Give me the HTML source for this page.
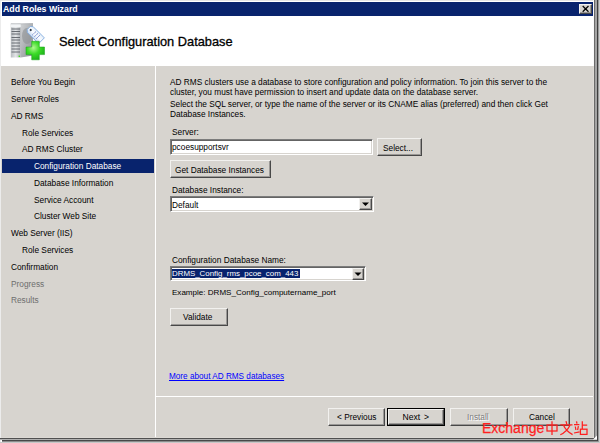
<!DOCTYPE html>
<html><head><meta charset="utf-8">
<style>
*{margin:0;padding:0;box-sizing:border-box}
html,body{width:600px;height:443px;overflow:hidden;background:#fff;position:relative;font-family:"Liberation Sans",sans-serif;}
.a{position:absolute}
.t{position:absolute;white-space:nowrap;font-size:8.3px;line-height:10px;color:#000}
.btn{position:absolute;background:#d7d4cf;border-top:1px solid #f2f1ef;border-left:1px solid #f2f1ef;border-right:1px solid #484848;border-bottom:1px solid #484848;box-shadow:inset -1px -1px 0 #9a9896}
</style></head><body>
<!-- outer frame -->
<div class="a" style="left:0;top:0;width:600px;height:1px;background:#e4e4e4"></div>
<div class="a" style="left:0;top:1px;width:1px;height:442px;background:#ececec"></div>
<!-- window -->
<div class="a" style="left:2px;top:2px;width:591px;height:14px;background:#08236d"></div>
<div class="t" style="left:3px;top:4px;color:#fff;font-weight:bold;font-size:8.8px">Add Roles Wizard</div>
<!-- close button -->
<div class="btn" style="left:579px;top:4px;width:13px;height:10px"></div>
<svg class="a" style="left:579px;top:4px" width="13" height="10" viewBox="0 0 13 10"><path d="M3.7 2L9.5 7.7M9.5 2L3.7 7.7" stroke="#000" stroke-width="1.25"/><circle cx="6.6" cy="4.85" r="0.9" fill="#000"/></svg>
<!-- header -->
<div class="a" style="left:1px;top:16px;width:592px;height:50px;background:#fff"></div>
<div class="a" style="left:59px;top:35px;font-size:12.8px;white-space:nowrap;line-height:14px;color:#000;-webkit-text-stroke:0.3px #000">Select Configuration Database</div>

<!-- icon -->
<svg class="a" style="left:0;top:0" width="50" height="64" viewBox="0 0 50 64">
<defs>
<linearGradient id="fr" x1="0" y1="0" x2="1" y2="0"><stop offset="0" stop-color="#b8bcc0"/><stop offset="0.5" stop-color="#e4e6e8"/><stop offset="1" stop-color="#a8acb0"/></linearGradient>
<linearGradient id="sd" x1="0" y1="0" x2="1" y2="1"><stop offset="0" stop-color="#d0d2d4"/><stop offset="1" stop-color="#8a8e92"/></linearGradient>
<radialGradient id="gp" cx="0.4" cy="0.35" r="0.75"><stop offset="0" stop-color="#b0f890"/><stop offset="0.45" stop-color="#3cdc28"/><stop offset="1" stop-color="#16a816"/></radialGradient>
<linearGradient id="tg" x1="0" y1="0" x2="0" y2="1"><stop offset="0" stop-color="#e4eef8"/><stop offset="0.5" stop-color="#fafcff"/><stop offset="1" stop-color="#c4d8f0"/></linearGradient>
</defs>
<path d="M20.8 24 L33 23.5 L33 55.5 L20.8 57.5 Z" fill="url(#sd)"/>
<ellipse cx="27" cy="36" rx="5" ry="8" fill="#8d9194" opacity="0.6"/>
<rect x="10.8" y="23.8" width="10" height="33.7" fill="url(#fr)"/>
<rect x="10.8" y="23.8" width="10" height="3.5" fill="#f2f4f6"/>
<path d="M11.5 29h8.5M11.5 31.5h8.5M11.5 34h8.5M11.5 37.5h8.5M11.5 40h8.5M11.5 43h8.5M11.5 46h8.5M11.5 49h8.5M11.5 52h8.5" stroke="#5c6166" stroke-width="0.9"/>
<rect x="18.6" y="55.6" width="1.4" height="1.4" fill="#44dd22"/>
<path d="M10.8 23.8 L20.8 23.8 L33 23.5" stroke="#9a9ea2" stroke-width="0.6" fill="none"/>
<g transform="translate(35.1 34.4) rotate(45)">
<path d="M-9 -2.2 L-6.8 -4.1 H9 V4.1 H-6.8 L-9 2.2 Z" fill="url(#tg)" stroke="#86aee0" stroke-width="0.9"/>
<circle cx="-6.2" cy="0" r="1.1" fill="#303a48"/>
<path d="M-1.5 -2.6V2.6M1.2 -2.6V2.6M3.9 -2.6V2.6" stroke="#4a64b8" stroke-width="0.85" stroke-dasharray="0.9 0.5"/>
</g>
<path d="M31.7 41.3h7.6v5.7h5.2v7.6h-5.2v5.2h-7.6v-5.2h-5.7v-7.6h5.7z" fill="url(#gp)" stroke="#14a014" stroke-width="0.5"/>
</svg>
<!-- body -->
<div class="a" style="left:1px;top:66px;width:592px;height:371px;background:#d7d4cf"></div>
<div class="a" style="left:155px;top:66px;width:1px;height:371px;background:#fff"></div>
<div class="a" style="left:156px;top:396px;width:437px;height:1px;background:#fff"></div>
<!-- right frame -->
<div class="a" style="left:593px;top:0;width:1px;height:66px;background:#fafafa"></div>
<div class="a" style="left:593px;top:66px;width:1px;height:372px;background:#dedbd6"></div>
<div class="a" style="left:594px;top:0;width:1px;height:439px;background:#6a6a6a"></div>
<div class="a" style="left:595px;top:0;width:2px;height:440px;background:#a4a4a4"></div>
<div class="a" style="left:597px;top:0;width:1px;height:441px;background:#3e3e3e"></div>
<div class="a" style="left:598px;top:0;width:1px;height:443px;background:#9a9a9a"></div>
<div class="a" style="left:599px;top:0;width:1px;height:443px;background:#cfcfcf"></div>
<!-- bottom frame -->
<div class="a" style="left:1px;top:437px;width:592px;height:1px;background:#dcd9d4"></div>
<div class="a" style="left:0;top:438px;width:594px;height:1px;background:#505050"></div>
<div class="a" style="left:0;top:439px;width:595px;height:1px;background:#b0b0b0"></div>
<div class="a" style="left:2px;top:440px;width:595px;height:1px;background:#484848"></div>
<div class="a" style="left:2px;top:441px;width:596px;height:1px;background:#8c8c8c"></div>
<div class="a" style="left:0;top:442px;width:600px;height:1px;background:#c8c8c8"></div>
<svg class="a" style="left:592px;top:435px" width="6" height="6"><path d="M5 0.5V4.5H1Z" fill="#fff"/></svg>

<!-- nav -->
<div class="a" style="left:2px;top:159px;width:152px;height:14px;background:#08236d"></div>
<div class="t" style="left:11px;top:77px">Before You Begin</div>
<div class="t" style="left:11px;top:94px">Server Roles</div>
<div class="t" style="left:11px;top:111px">AD RMS</div>
<div class="t" style="left:22px;top:128px">Role Services</div>
<div class="t" style="left:22px;top:144px">AD RMS Cluster</div>
<div class="t" style="left:34px;top:161px;color:#fff">Configuration Database</div>
<div class="t" style="left:34px;top:178px">Database Information</div>
<div class="t" style="left:34px;top:195px">Service Account</div>
<div class="t" style="left:34px;top:211px">Cluster Web Site</div>
<div class="t" style="left:11px;top:228px">Web Server (IIS)</div>
<div class="t" style="left:22px;top:245px">Role Services</div>
<div class="t" style="left:11px;top:262px">Confirmation</div>
<div class="t" style="left:11px;top:279px;color:#6e6e6e">Progress</div>
<div class="t" style="left:11px;top:295px;color:#6e6e6e">Results</div>

<!-- right content -->
<div class="t" style="left:170px;top:77px">AD RMS clusters use a database to store configuration and policy information. To join this server to the</div>
<div class="t" style="left:170px;top:87px">cluster, you must have permission to insert and update data on the database server.</div>
<div class="t" style="left:170px;top:99px">Select the SQL server, or type the name of the server or its CNAME alias (preferred) and then click Get</div>
<div class="t" style="left:170px;top:109px">Database Instances.</div>
<div class="t" style="left:172px;top:127px">Server:</div>

<!-- server textbox -->
<div class="a" style="left:170px;top:139px;width:203px;height:16px;background:#fff;border-top:1px solid #7c7c7c;border-left:1px solid #7c7c7c;border-right:1px solid #fff;border-bottom:1px solid #fff;box-shadow:inset 1px 1px 0 #646464, inset -1px -1px 0 #d7d4cf"></div>
<div class="t" style="left:172px;top:142px">pcoesupportsvr</div>
<div class="btn" style="left:377px;top:138px;width:45px;height:18px"></div>
<div class="t" style="left:383px;top:143px">Select...</div>
<div class="btn" style="left:170px;top:160px;width:101px;height:18px"></div>
<div class="t" style="left:175px;top:165px">Get Database Instances</div>
<div class="t" style="left:172px;top:185px">Database Instance:</div>
<!-- combo 1 -->
<div class="a" style="left:170px;top:196px;width:204px;height:16px;background:#fff;border-top:1px solid #7c7c7c;border-left:1px solid #7c7c7c;border-right:1px solid #fff;border-bottom:1px solid #fff;box-shadow:inset 1px 1px 0 #646464, inset -1px -1px 0 #d7d4cf"></div>
<div class="btn" style="left:359px;top:198px;width:13px;height:12px"></div>
<svg class="a" style="left:359px;top:198px" width="13" height="12"><path d="M3 4.5h7l-3.5 3.5z" fill="#000"/></svg>
<div class="t" style="left:172px;top:200px">Default</div>
<div class="t" style="left:172px;top:255px">Configuration Database Name:</div>
<!-- combo 2 -->
<div class="a" style="left:170px;top:266px;width:196px;height:15px;background:#fff;border-top:1px solid #7c7c7c;border-left:1px solid #7c7c7c;border-right:1px solid #fff;border-bottom:1px solid #fff;box-shadow:inset 1px 1px 0 #646464, inset -1px -1px 0 #d7d4cf"></div>
<div class="btn" style="left:352px;top:268px;width:12px;height:12px"></div>
<svg class="a" style="left:352px;top:268px" width="12" height="12"><path d="M2.5 4.5h7l-3.5 3.5z" fill="#000"/></svg>
<div class="a" style="left:172px;top:269px;width:128px;height:9px;background:#08236d"></div>
<div class="t" style="left:172px;top:269px;color:#fff;line-height:9px;font-size:7.9px">DRMS_Config_rms_pcoe_com_443</div>
<div class="t" style="left:172px;top:288px;font-size:8.05px">Example: DRMS_Config_computername_port</div>
<div class="btn" style="left:170px;top:308px;width:58px;height:18px"></div>
<div class="t" style="left:183px;top:312px">Validate</div>
<div class="t" style="left:169px;top:371.5px;color:#0000ff;text-decoration:underline;font-size:8.2px">More about AD RMS databases</div>
<!-- bottom buttons -->
<div class="btn" style="left:328px;top:408px;width:57px;height:18px"></div>
<div class="t" style="left:337px;top:412px">&lt; Previous</div>
<div class="a" style="left:387px;top:408px;width:58px;height:18px;border:1px solid #000"></div>
<div class="btn" style="left:388px;top:409px;width:56px;height:16px"></div>
<div class="t" style="left:402.5px;top:412px;font-size:8.6px;word-spacing:1.5px">Next &gt;</div>
<div class="btn" style="left:450px;top:408px;width:58px;height:18px"></div>
<div class="t" style="left:468px;top:413px;color:#fff">Install</div>
<div class="t" style="left:467px;top:412px;color:#808080">Install</div>
<div class="btn" style="left:513px;top:408px;width:57px;height:18px"></div>
<div class="t" style="left:529px;top:412px">Cancel</div>
<!-- watermark -->
<div class="a" style="left:482px;top:421px;font-size:14px;line-height:15px;color:#ff1f1f;-webkit-text-stroke:0.25px #ff1f1f;white-space:nowrap">Exchange</div>

<svg class="a" style="left:540px;top:418px" width="52" height="22" viewBox="540 418 52 22">
<g stroke="#ff1f1f" stroke-width="1.25" fill="none" stroke-linecap="butt">
<rect x="547" y="425" width="10" height="6"/>
<path d="M552 421.3V435"/>
<path d="M566 421.2L566.8 424M560.3 424.8H572.5M563.5 425.2Q566 431 572.6 434.6M570 425.2Q567 431.5 560.3 434.8"/>
<path d="M576.5 421.3L577 423.6M574 424.6H579.4M575.3 426.5L575.9 430M578.4 426.2L577.6 430M574 433L579.6 431.8M582.3 421.3V429M582.3 425H587.2"/>
<rect x="580.4" y="429.2" width="6.6" height="5.2"/>
</g></svg>
</body></html>
